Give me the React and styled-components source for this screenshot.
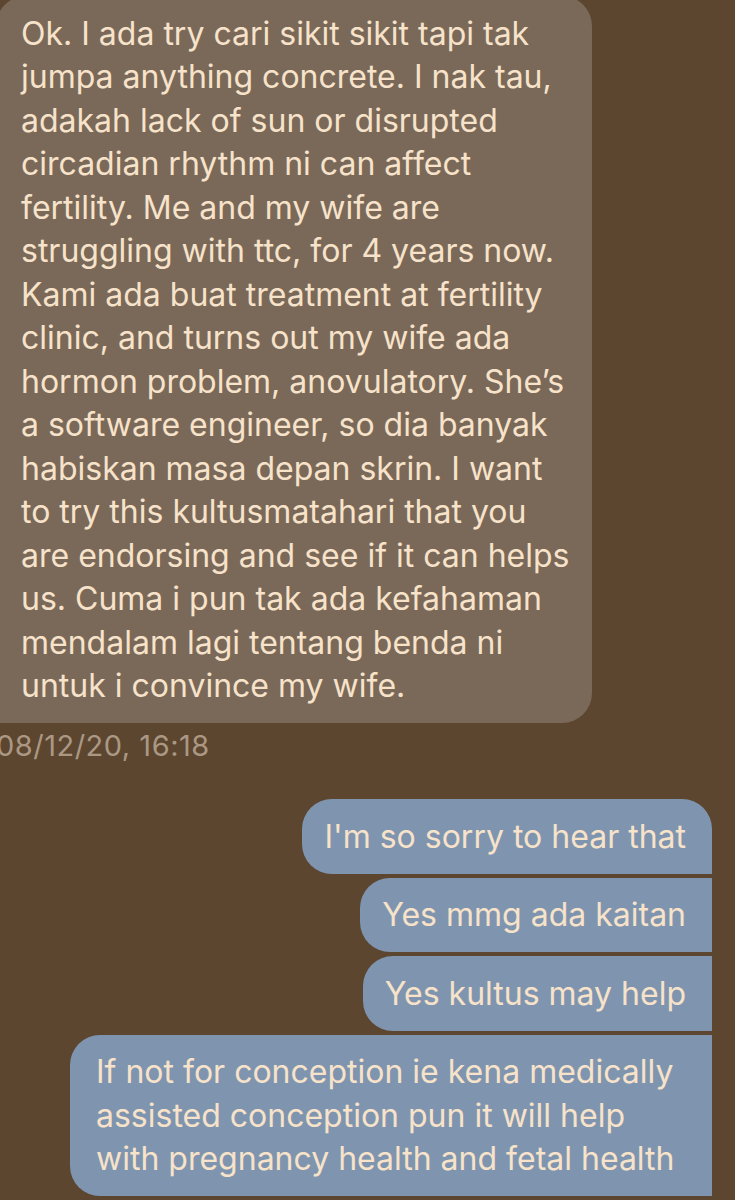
import React from "react";
import styled, { createGlobalStyle, css } from "styled-components";

const Global = createGlobalStyle`
  html, body {
    margin: 0;
    padding: 0;
    background: #5c462f;
  }
  body {
    font-family: Inter, "Liberation Sans", Arial, sans-serif;
    -webkit-font-smoothing: antialiased;
  }
`;

const Page = styled.div`
  width: 735px;
  height: 1200px;
  overflow: hidden;
  background: #5c462f;
`;

const Thread = styled.div`
  display: flex;
  flex-direction: column;
`;

const ReceivedGroup = styled.div`
  display: flex;
  flex-direction: column;
  align-items: flex-start;
  margin: -4px 0 0 -4px;
`;

const SentGroup = styled.div`
  display: flex;
  flex-direction: column;
  align-items: flex-end;
  gap: 4px;
  margin: 35px 23px 0 70px;
`;

const Bubble = styled.div`
  display: flex;
  flex-direction: column;
  padding: 15.5px 26px;
  color: #f7e2ca;
  font-size: 32px;
  line-height: 43.5px;
  border-radius: 30px;
  ${(p) =>
    p.$side === "received"
      ? css`
          background: #7a6959;
          border-bottom-left-radius: 0;
          width: 596px;
          box-sizing: border-box;
          padding-left: 25px;
        `
      : css`
          background: #7f95af;
          padding-left: ${p.$fill ? "26px" : "22px"};
          align-self: ${p.$fill ? "stretch" : "auto"};
          border-top-right-radius: ${p.$first ? "30px" : "0"};
          border-bottom-right-radius: 0;
        `}
`;

const Line = styled.span`
  display: block;
  white-space: nowrap;
`;

const Timestamp = styled.div`
  margin-top: 4px;
  font-size: 29px;
  letter-spacing: 0.5px;
  line-height: 37px;
  color: #ab9884;
`;

const received = [
  "Ok. I ada try cari sikit sikit tapi tak",
  "jumpa anything concrete. I nak tau,",
  "adakah lack of sun or disrupted",
  "circadian rhythm ni can affect",
  "fertility. Me and my wife are",
  "struggling with ttc, for 4 years now.",
  "Kami ada buat treatment at fertility",
  "clinic, and turns out my wife ada",
  "hormon problem, anovulatory. She’s",
  "a software engineer, so dia banyak",
  "habiskan masa depan skrin. I want",
  "to try this kultusmatahari that you",
  "are endorsing and see if it can helps",
  "us. Cuma i pun tak ada kefahaman",
  "mendalam lagi tentang benda ni",
  "untuk i convince my wife.",
];

const sent = [
  ["I'm so sorry to hear that"],
  ["Yes mmg ada kaitan"],
  ["Yes kultus may help"],
  [
    "If not for conception ie kena medically",
    "assisted conception pun it will help",
    "with pregnancy health and fetal health",
  ],
];

export default function App() {
  return (
    <Page>
      <Global />
      <Thread>
        <ReceivedGroup>
          <Bubble $side="received">
            {received.map((l, i) => (
              <Line key={i}>{l}</Line>
            ))}
          </Bubble>
          <Timestamp>08/12/20, 16:18</Timestamp>
        </ReceivedGroup>
        <SentGroup>
          {sent.map((lines, i) => (
            <Bubble
              key={i}
              $side="sent"
              $first={i === 0}
              $fill={lines.length > 1}
            >
              {lines.map((l, j) => (
                <Line key={j}>{l}</Line>
              ))}
            </Bubble>
          ))}
        </SentGroup>
      </Thread>
    </Page>
  );
}
